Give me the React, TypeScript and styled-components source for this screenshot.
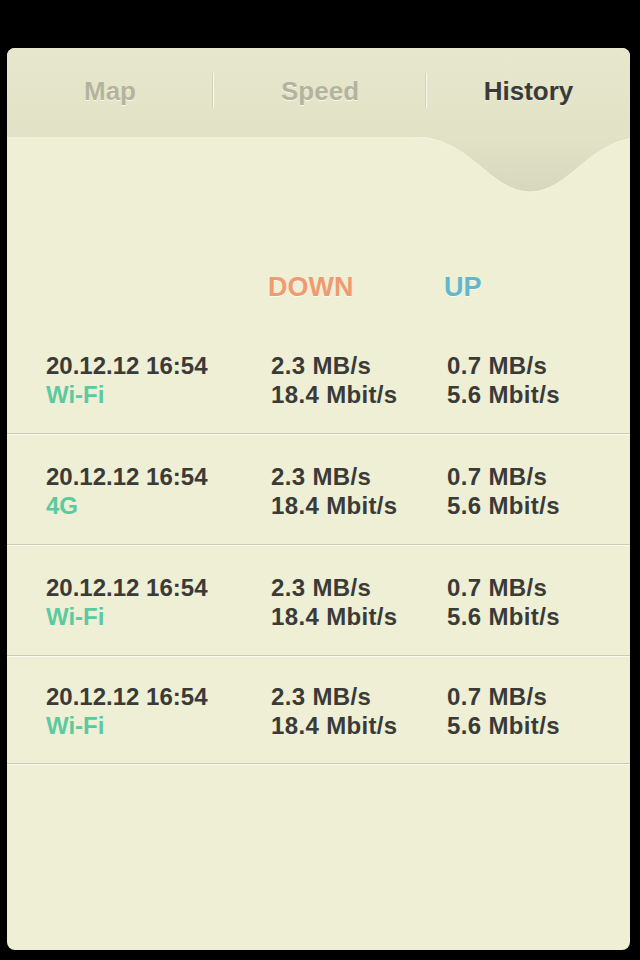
import styled, { createGlobalStyle } from 'styled-components'

const GlobalStyle = createGlobalStyle`
  html, body {
    margin: 0;
    background: #000;
  }
  body {
    font-family: 'Liberation Sans', Arial, sans-serif;
    -webkit-font-smoothing: antialiased;
  }
`

const Screen = styled.div`
  width: 640px;
  height: 960px;
  box-sizing: border-box;
  padding: 48px 10px 10px 7px;
  background: #000;
`

const Card = styled.div`
  position: relative;
  width: 623px;
  height: 902px;
  border-radius: 8px;
  overflow: hidden;
  background: #eeefd5;
`

const TabBar = styled.div`
  display: grid;
  grid-template-columns: 206px auto 212px auto 1fr;
  align-items: start;
  height: 89px;
  background: linear-gradient(#e6e7cc, #e1e2c6);
`

const Tab = styled.div<{ $active?: boolean }>`
  padding-top: 28px;
  text-align: center;
  font-size: 26px;
  line-height: 30px;
  font-weight: 700;
  color: ${({ $active }) => ($active ? '#3a3b38' : '#b3b49d')};
  text-shadow: ${({ $active }) => ($active ? '0 1px 0 rgba(255,255,255,0.35)' : '0 1px 0 #f7f7ea')};
`

const Divider = styled.div`
  width: 1px;
  height: 35px;
  margin-top: 25px;
  background: #f8f8ec;
  box-shadow: -1px 0 0 #d2d3b9;
`

const Notch = styled.svg`
  position: absolute;
  top: 89px;
  left: 408px;
  width: 230px;
  height: 56px;
`

const Content = styled.div`
  padding-top: 134px;
`

const HeadingRow = styled.div`
  display: grid;
  grid-template-columns: 225px 176px 1fr;
  padding-left: 39px;
  margin-bottom: 20px;
`

const Heading = styled.div<{ $color: string }>`
  margin-left: -3px;
  font-size: 27px;
  line-height: 32px;
  font-weight: 700;
  color: ${({ $color }) => $color};
  text-shadow: 0 1px 0 #fbfbf0;
`

const Row = styled.div`
  display: grid;
  grid-template-columns: 225px 176px 1fr;
  padding: 28px 0 24px 39px;
  border-bottom: 1px solid #cbccb3;
  box-shadow: 0 1px 0 #fafaee;

  &:last-child {
    padding-top: 26px;
    padding-bottom: 23px;
  }
`

const Cell = styled.div`
  display: flex;
  flex-direction: column;
`

const Line = styled.span<{ $accent?: boolean; $wide?: boolean }>`
  font-size: 24px;
  line-height: 29px;
  font-weight: 700;
  white-space: nowrap;
  letter-spacing: ${({ $wide }) => ($wide ? '0.35px' : '0')};
  color: ${({ $accent }) => ($accent ? '#5bcaa1' : '#3a3b38')};
`

const history = [
  { date: '20.12.12 16:54', net: 'Wi-Fi' },
  { date: '20.12.12 16:54', net: '4G' },
  { date: '20.12.12 16:54', net: 'Wi-Fi' },
  { date: '20.12.12 16:54', net: 'Wi-Fi' },
]

export default function App() {
  return (
    <Screen>
      <GlobalStyle />
      <Card>
        <TabBar>
          <Tab>Map</Tab>
          <Divider />
          <Tab>Speed</Tab>
          <Divider />
          <Tab $active>History</Tab>
        </TabBar>
        <Notch viewBox="0 0 230 56">
          <defs>
            <linearGradient id="notchFill" x1="0" y1="0" x2="0" y2="1">
              <stop offset="0" stopColor="#e1e2c6" />
              <stop offset="1" stopColor="#d6d7bc" />
            </linearGradient>
          </defs>
          <path d="M0 0 C55 0 75 55 115 55 C155 55 175 0 230 0 Z" fill="url(#notchFill)" />
          <path d="M0 0 C55 0 75 55 115 55 C155 55 175 0 230 0" fill="none" stroke="#f3f3e2" strokeWidth="1" />
        </Notch>
        <Content>
          <HeadingRow>
            <span />
            <Heading $color="#ee9b72">DOWN</Heading>
            <Heading $color="#63b7cc">UP</Heading>
          </HeadingRow>
          {history.map((h, i) => (
            <Row key={i}>
              <Cell>
                <Line>{h.date}</Line>
                <Line $accent>{h.net}</Line>
              </Cell>
              <Cell>
                <Line $wide>2.3 MB/s</Line>
                <Line $wide>18.4 Mbit/s</Line>
              </Cell>
              <Cell>
                <Line $wide>0.7 MB/s</Line>
                <Line $wide>5.6 Mbit/s</Line>
              </Cell>
            </Row>
          ))}
        </Content>
      </Card>
    </Screen>
  )
}
